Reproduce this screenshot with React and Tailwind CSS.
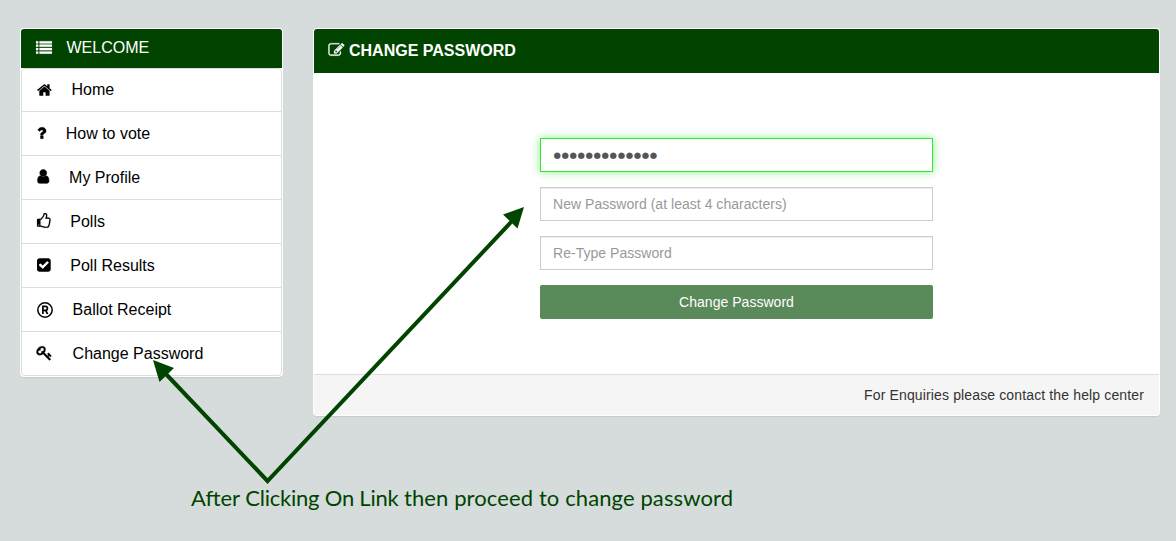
import React from "react";

const ICONS = {
  list: {
    box: "0 0 1792 1792",
    w: "w-4",
    stroke: 20,
    d: "M256 1312v192q0 13-9.5 22.5t-22.5 9.5h-192q-13 0-22.5-9.5t-9.5-22.5v-192q0-13 9.5-22.5t22.5-9.5h192q13 0 22.5 9.5t9.5 22.5zm0-384v192q0 13-9.5 22.5t-22.5 9.5h-192q-13 0-22.5-9.5t-9.5-22.5v-192q0-13 9.5-22.5t22.5-9.5h192q13 0 22.5 9.5t9.5 22.5zm0-384v192q0 13-9.5 22.5t-22.5 9.5h-192q-13 0-22.5-9.5t-9.5-22.5v-192q0-13 9.5-22.5t22.5-9.5h192q13 0 22.5 9.5t9.5 22.5zm1536 768v192q0 13-9.5 22.5t-22.5 9.5h-1344q-13 0-22.5-9.5t-9.5-22.5v-192q0-13 9.5-22.5t22.5-9.5h1344q13 0 22.5 9.5t9.5 22.5zm-1536-1152v192q0 13-9.5 22.5t-22.5 9.5h-192q-13 0-22.5-9.5t-9.5-22.5v-192q0-13 9.5-22.5t22.5-9.5h192q13 0 22.5 9.5t9.5 22.5zm1536 768v192q0 13-9.5 22.5t-22.5 9.5h-1344q-13 0-22.5-9.5t-9.5-22.5v-192q0-13 9.5-22.5t22.5-9.5h1344q13 0 22.5 9.5t9.5 22.5zm0-384v192q0 13-9.5 22.5t-22.5 9.5h-1344q-13 0-22.5-9.5t-9.5-22.5v-192q0-13 9.5-22.5t22.5-9.5h1344q13 0 22.5 9.5t9.5 22.5zm0-384v192q0 13-9.5 22.5t-22.5 9.5h-1344q-13 0-22.5-9.5t-9.5-22.5v-192q0-13 9.5-22.5t22.5-9.5h1344q13 0 22.5 9.5t9.5 22.5z",
  },
  home: {
    box: "64 0 1664 1792",
    w: "w-[14.86px]",
    stroke: 0,
    d: "M1472 992v480q0 26-19 45t-45 19h-384v-384h-256v384h-384q-26 0-45-19t-19-45v-480q0-1 .5-3t.5-3l575-474 575 474q1 2 1 6zm223-69l-62 74q-8 9-21 11h-3q-13 0-21-7l-692-577-692 577q-12 8-24 7-13-2-21-11l-62-74q-8-10-7-23.5t11-21.5l719-599q32-26 76-26t76 26l244 204v-195q0-14 9-23t23-9h192q14 0 23 9t9 23v408l219 182q10 8 11 21.5t-7 23.5z",
  },
  question: {
    box: "384 0 1024 1792",
    w: "w-[9.14px]",
    stroke: 40,
    d: "M1088 1256v240q0 16-12 28t-28 12h-240q-16 0-28-12t-12-28v-240q0-16 12-28t28-12h240q16 0 28 12t12 28zm316-600q0 54-15.5 101t-35 76.5-55 59.5-57.5 43.5-61 35.5q-41 23-68.5 65t-27.5 67q0 17-12 32.5t-28 15.5h-240q-15 0-25.5-18.5t-10.5-37.5v-45q0-83 65-156.5t143-108.5q59-27 84-56t25-76q0-42-46.5-74t-107.5-32q-65 0-108 29-35 25-107 115-13 16-31 16-12 0-25-8l-164-125q-13-10-15.5-25t5.5-28q160-266 464-266 80 0 161 31t146 83 106 127.5 41 158.5z",
  },
  user: {
    box: "256 64 1280 1792",
    w: "w-[12.5px]",
    stroke: 60,
    d: "M1536 1399q0 109-62.5 187t-150.5 78h-854q-88 0-150.5-78t-62.5-187q0-85 8.5-160.5t31.5-152 58.5-131 94-89 134.5-34.5q131 128 313 128t313-128q76 0 134.5 34.5t94 89 58.5 131 31.5 152 8.5 160.5zm-256-887q0 159-112.5 271.5t-271.5 112.5-271.5-112.5-112.5-271.5 112.5-271.5 271.5-112.5 271.5 112.5 112.5 271.5z",
  },
  thumb: {
    box: "128 0 1536 1792",
    w: "w-[13.71px]",
    stroke: 20,
    d: "M384 1344q0-26-19-45t-45-19-45 19-19 45 19 45 45 19 45-19 19-45zm1152-576q0-51-39-89.5t-89-38.5h-352q0-58 48-159.5t48-160.5q0-98-32-145t-128-47q-26 26-38 85t-30.5 125.5-59.5 109.5q-22 23-77 91-4 5-23 30t-31.5 41-34.5 42.5-40 44-38.5 35.5-40 27-35.5 9h-32v640h32q13 0 31.5 3t33 6.5 38 11 35 11.5 35.5 12.5 29 10.5q211 73 342 73h121q192 0 192-167 0-26-5-56 30-16 47.5-52.5t17.5-73.5-18-69q53-50 53-119 0-25-10-55.5t-25-47.5q32-1 53.5-47t21.5-81zm128-1q0 89-49 163 9 33 9 69 0 77-38 144 3 21 3 43 0 101-60 178 1 139-85 219.5t-227 80.5h-129q-96 0-189.5-22.5t-216.5-65.5q-116-40-138-40h-288q-53 0-90.5-37.5t-37.5-90.5v-640q0-53 37.5-90.5t90.5-37.5h274q36-24 137-155 58-75 107-128 24-25 35.5-85.5t30.5-126.5 62-108q39-37 90-37 84 0 151 32.5t102 101.5 35 186q0 93-48 192h176q104 0 180 76t76 179z",
  },
  check: {
    box: "128 0 1536 1792",
    w: "w-[13.71px]",
    stroke: 0,
    d: "M813 1299l614-614q19-19 19-45t-19-45l-102-102q-19-19-45-19t-45 19l-467 467-211-211q-19-19-45-19t-45 19l-102 102q-19 19-19 45t19 45l358 358q19 19 45 19t45-19zm851-883v960q0 119-84.5 203.5t-203.5 84.5h-960q-119 0-203.5-84.5t-84.5-203.5v-960q0-119 84.5-203.5t203.5-84.5h960q119 0 203.5 84.5t84.5 203.5z",
  },
  key: {
    box: "64 0 1792 1792",
    w: "w-4",
    stroke: 30,
    d: "M832 512q0-80-56-136t-136-56-136 56-56 136q0 42 19 83-41-19-83-19-80 0-136 56t-56 136 56 136 136 56 136-56 56-136q0-42-19-83 41 19 83 19 80 0 136-56t56-136zm851 704q0 17-49 66t-66 49q-9 0-28.5-16t-36.5-33-38.5-40-24.5-26l-96 96 220 220q28 28 28 68 0 42-39 81t-81 39q-40 0-68-28l-671-671q-176 131-365 131-163 0-265.5-102.5t-102.5-265.5q0-160 95-313t248-248 313-95q163 0 265.5 102.5t102.5 265.5q0 189-131 365l355 355 96-96q-3-3-26-24.5t-40-38.5-33-36.5-16-28.5q0-17 49-66t66-49q13 0 23 10 6 6 46 44.5t82 79.5 86.5 86 73 78 28.5 41z",
  },
  edit: {
    box: "-40 0 1792 1792",
    w: "w-4",
    stroke: 25,
    d: "M888 1184l116-116-152-152-116 116v56h96v96h56zm440-720q-16-16-33 1l-350 350q-17 17-1 33t33-1l350-350q17-17 1-33zm80 594v190q0 119-84.5 203.5t-203.5 84.5h-832q-119 0-203.5-84.5t-84.5-203.5v-832q0-119 84.5-203.5t203.5-84.5h832q63 0 117 25 15 7 18 23 3 17-9 29l-49 49q-14 14-32 8-23-6-45-6h-832q-66 0-113 47t-47 113v832q0 66 47 113t113 47h832q66 0 113-47t47-113v-126q0-13 9-22l64-64q15-15 35-7t20 29zm-96-738l288 288-672 672h-288v-288zm444 132l-92 92-288-288 92-92q28-28 68-28t68 28l152 152q28 28 28 68t-28 68z",
  },
};

function Icon({ name }) {
  if (name === "registered") {
    return (
      <svg viewBox="0 0 16 16" className="h-4 w-4 shrink-0" fill="none" stroke="currentColor">
        <circle cx="8" cy="8" r="7.2" strokeWidth="1.5" />
        <path d="M5.9 12V4.3h2.5a2 2 0 0 1 0 4.1H5.9M8.6 8.4l2 3.6" strokeWidth="1.7" />
      </svg>
    );
  }
  const icon = ICONS[name];
  return (
    <svg
      viewBox={icon.box}
      className={`mb-px h-4 shrink-0 overflow-visible ${icon.w}`}
      fill="currentColor"
      stroke="currentColor"
      strokeWidth={icon.stroke}
    >
      <path d={icon.d} />
    </svg>
  );
}

const MENU = [
  { icon: "home", label: "Home" },
  { icon: "question", label: "How to vote" },
  { icon: "user", label: "My Profile" },
  { icon: "thumb", label: "Polls" },
  { icon: "check", label: "Poll Results" },
  { icon: "registered", label: "Ballot Receipt" },
  { icon: "key", label: "Change Password" },
];

function Sidebar() {
  return (
    <nav className="w-[263px] shrink-0 rounded border border-transparent bg-white shadow-[0_1px_1px_rgba(0,0,0,0.08)]">
      <h2 className="flex h-[39px] items-center gap-[14.5px] rounded-t-[3px] bg-[#004400] pl-[15px] pb-px text-base text-white">
        <Icon name="list" />
        WELCOME
      </h2>
      <ul className="overflow-hidden rounded border border-[#ddd] text-base text-black">
        {MENU.map((item) => (
          <li
            key={item.label}
            className="flex h-11 items-center gap-[19.6px] border-b border-[#ddd] pl-[15px] first:h-[43px] last:h-[43px] last:border-b-0"
          >
            <Icon name={item.icon} />
            {item.label}
          </li>
        ))}
      </ul>
    </nav>
  );
}

function PasswordPanel() {
  return (
    <main className="flex h-[388px] w-[847px] flex-col rounded border border-transparent bg-white shadow-[0_1px_1px_rgba(0,0,0,0.08)]">
      <h1 className="flex h-11 shrink-0 items-center gap-[5px] rounded-t-[3px] bg-[#004400] pb-px pl-3.5 text-base font-bold text-white">
        <Icon name="edit" />
        CHANGE PASSWORD
      </h1>
      <form className="flex w-[393px] grow flex-col gap-[15px] self-center pt-[65px] text-sm tracking-[0.03px]">
        <div className="flex h-[34px] items-center border border-[#33e633] pl-[12.5px] text-[#555] shadow-[0_0_8px_rgba(51,230,51,0.6)]">
          <span className="font-['DejaVu_Sans',sans-serif] text-[8.5px] tracking-[0.6px]">●●●●●●●●●●●●●</span>
        </div>
        <div className="flex h-[34px] items-center border border-[#ccc] pl-3 text-[#999] shadow-[inset_0_1px_1px_rgba(0,0,0,0.075)]">
          New Password (at least 4 characters)
        </div>
        <div className="flex h-[34px] items-center border border-[#ccc] pl-3 text-[#999] shadow-[inset_0_1px_1px_rgba(0,0,0,0.075)]">
          Re-Type Password
        </div>
        <button type="button" className="h-[34px] rounded-[2px] bg-[#5a895a] text-white">
          Change Password
        </button>
      </form>
      <footer className="flex h-[41px] shrink-0 items-center justify-end rounded-b-[3px] border-t border-[#ddd] bg-[#f5f5f5] pr-[15px] text-sm tracking-[0.136px] text-[#333]">
        For Enquiries please contact the help center
      </footer>
    </main>
  );
}

export default function App() {
  return (
    <div className="relative h-[541px] w-[1176px] overflow-hidden bg-[#d6dcdc] font-['Liberation_Sans',Arial,sans-serif]">
      <div className="flex items-start gap-[30px] pt-7 pl-5">
        <Sidebar />
        <PasswordPanel />
      </div>
      <svg className="pointer-events-none absolute inset-0" width="1176" height="541" fill="none">
        <path d="M165 373L267.5 481L514 219" stroke="#004400" strokeWidth="4" />
        <path d="M153 360L174 368L159.5 382ZM524 207L517.5 228.5L503 214.5Z" fill="#004400" />
      </svg>
      <p className="absolute top-[484px] left-[191px] font-['Lato',sans-serif] text-[22px] leading-7 whitespace-nowrap text-[#004400]">
        After <span className="tracking-[-0.22px]">Clicking On Link </span>
        <span className="tracking-[0.11px]">then proceed to change password</span>
      </p>
    </div>
  );
}
